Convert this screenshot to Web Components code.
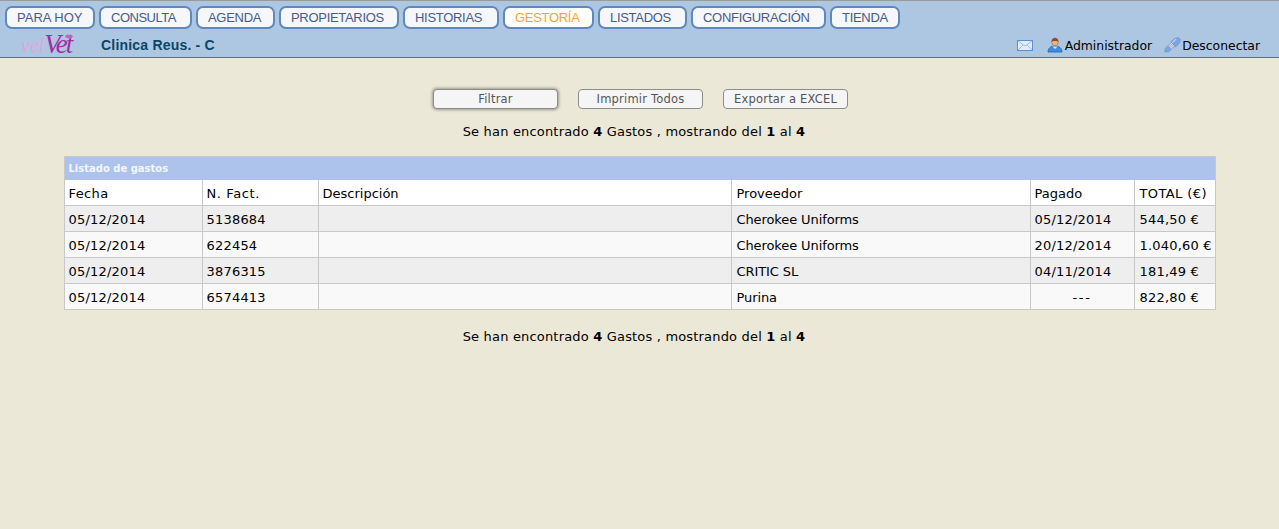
<!DOCTYPE html>
<html lang="es"><head><meta charset="utf-8"><title>Gastos</title>
<style>
html,body{margin:0;height:100%;background:#ece8d8;}
body{font:13px "DejaVu Sans",Verdana,sans-serif;color:#000;height:529px;overflow:hidden}
</style></head><body>
<app-header></app-header>
<main-area>
  <action-bar>
    <action-button focused>Filtrar</action-button>
    <action-button>Imprimir Todos</action-button>
    <action-button>Exportar a EXCEL</action-button>
  </action-bar>
  <result-count></result-count>
  <data-table title="Listado de gastos">
    <data-row kind="head" cells="Fecha|N. Fact.|Descripción|Proveedor|Pagado|TOTAL (€)" ls=".4|.6|0|0|0|.4"></data-row>
    <data-row kind="odd" cells="05/12/2014|5138684||Cherokee Uniforms|05/12/2014|544,50 €"></data-row>
    <data-row kind="even" cells="05/12/2014|622454||Cherokee Uniforms|20/12/2014|1.040,60 €"></data-row>
    <data-row kind="odd" cells="05/12/2014|3876315||CRITIC SL|04/11/2014|181,49 €"></data-row>
    <data-row kind="even" cells="05/12/2014|6574413||Purina|---|822,80 €" ls=".2|.2|0|-.1|1.6|.2" center="4"></data-row>
  </data-table>
  <result-count></result-count>
</main-area>
<script>
const def=(name,html,init)=>customElements.define(name,class extends HTMLElement{
  constructor(){super();this.attachShadow({mode:'open'}).innerHTML=html;}
  connectedCallback(){init&&init.call(this,this.shadowRoot);}
});
def('nav-tab',`<style>
:host{display:block;box-sizing:border-box;height:23px;border:2px solid #5f88bc;border-radius:7px;background:#f5f7fa;color:#4a5a8a;
font:13px/19px "Liberation Sans",Arial,sans-serif;padding:0 10px;white-space:nowrap;letter-spacing:-.3px}
:host([active]){background:#fff;color:#f5a623}
</style><slot></slot>`);
def('app-header',`<style>
:host{display:block;box-sizing:border-box;height:58px;background:#adc7e3;border-top:1px solid #9a9a9a;border-bottom:1px solid #5d7080;padding:5px 0 0 5px}
nav{display:flex;gap:4px}
.sub{display:flex;align-items:center;height:24px;margin-top:4px}
.logo{width:96px;height:24px;box-sizing:border-box;padding-left:16px;font:italic 20px/24px "Liberation Serif",serif;color:#e3a3dc;white-space:nowrap;position:relative}
.logo b{font-weight:400;font-size:27px;color:#a52ba0;letter-spacing:-2px;line-height:20px;vertical-align:-1px}
.logo svg{position:absolute;left:60px;top:1px}
.clinic{font:bold 14px "Liberation Sans",Arial,sans-serif;color:#0c4566;letter-spacing:.2px}
.right{margin-left:auto;display:flex;align-items:center;padding-right:19px;font-size:12.400px;color:#000}
.right span{display:flex;align-items:center}
svg{display:block;flex:none}
</style>
<nav>
<nav-tab style="width:90px;letter-spacing:0">PARA HOY</nav-tab><nav-tab style="width:93px;letter-spacing:-.5px">CONSULTA</nav-tab><nav-tab style="width:79px">AGENDA</nav-tab><nav-tab style="width:120px">PROPIETARIOS</nav-tab><nav-tab style="width:96px">HISTORIAS</nav-tab><nav-tab active style="width:91px">GESTORÍA</nav-tab><nav-tab style="width:89px">LISTADOS</nav-tab><nav-tab style="width:135px">CONFIGURACIÓN</nav-tab><nav-tab style="width:70px">TIENDA</nav-tab>
</nav>
<div class="sub">
<div class="logo">vel<b>Vet</b><svg width="8" height="5" viewBox="0 0 8 5"><path d="M0 2.500C2 0 3 .5 4 1c1-.5 2-1 4 1.500C6 5 2 5 0 2.500z" fill="#b968b8"/></svg></div>
<div class="clinic">Clinica Reus. - C</div>
<div class="right">
<svg width="16" height="11" viewBox="0 0 16 11" style="margin-right:14px"><rect x=".5" y=".5" width="15" height="10" fill="#e4eefa" stroke="#5a8fd0"/><path d="M1 1l7 5 7-5M1 10l5-5M15 10l-5-5" fill="none" stroke="#9dbde6"/></svg>
<svg width="16" height="16" viewBox="0 0 16 16" style="margin-right:2px"><path d="M1 15c0-4 3-6 7-6s7 2 7 6z" fill="#3f8de0" stroke="#1f5fae" stroke-width=".8"/><path d="M5.500 9.500L8 12l2.500-2.500z" fill="#cfe4fa"/><circle cx="8" cy="5.200" r="3.400" fill="#e9b48c" stroke="#9c6a45" stroke-width=".6"/><path d="M4.600 5c0-3 1.600-4.200 3.400-4.200S11.400 2 11.400 5C10 3.600 6 3.600 4.600 5z" fill="#8a4f25"/></svg>
<span style="margin-right:12px">Administrador</span>
<svg width="17" height="16" viewBox="0 0 17 16" style="margin-right:1px"><g transform="rotate(-42 8.500 8)"><path d="M-2 8l3-2.500h4v5H1z" fill="#7fa5e0" stroke="#5c80bd" stroke-width=".4"/><rect x="5" y="5.500" width="4.500" height="5" fill="#dfe3ea" stroke="#77889f" stroke-width=".5"/><path d="M6.500 5.500v5M8 5.500v5" stroke="#7c8ca5" stroke-width=".6"/><path d="M9.500 4.500h5l3.500 2v3l-3.500 2h-5z" fill="#7fa5e0" stroke="#5c80bd" stroke-width=".4"/><path d="M10 6h5" stroke="#c5d7f3"/></g></svg>
<span>Desconectar</span>
</div></div>`);
def('main-area',`<style>:host{display:flex;flex-direction:column;align-items:center;padding-top:31px}</style><slot></slot>`);
def('action-bar',`<style>:host{display:flex;gap:20px;margin:0 0 14px 2px}</style><slot></slot>`);
def('action-button',`<style>
:host{display:block;box-sizing:border-box;width:125px;height:20px;border:1px solid #8c8c8c;border-radius:4px;background:#f5f5f5;color:#555;font:11.500px/18px "DejaVu Sans",Verdana,sans-serif;text-align:center;letter-spacing:.2px}
:host([focused]){box-shadow:0 0 3px 1px rgba(0,0,0,.35)}
</style><slot></slot>`);
def('result-count',`<style>:host{display:block;height:18px;line-height:18px;font-size:13px;text-align:center;white-space:pre;letter-spacing:.18px;padding-right:11px}</style>Se han encontrado <b>4</b> Gastos , mostrando del <b>1</b> al <b>4</b>`);
def('data-table',`<style>
:host{display:block;box-sizing:border-box;width:1152px;margin:15px 0 18px 0;border:1px solid #c8c8c8;border-bottom:0}
.t{height:23px;background:#aec3eb;color:#f2f6fd;font:bold 10px/23px "DejaVu Sans",Verdana,sans-serif;padding-left:4px}
</style><div class="t"></div><slot></slot>`,function(r){r.querySelector('.t').textContent=this.getAttribute('title');this.removeAttribute('title');});
def('data-row',`<style>
:host{display:grid;grid-template-columns:138px 116px 413px 299px 104px 81px;height:26px;box-sizing:border-box;border-bottom:1px solid #c8c8c8;font-size:13px;line-height:27px}
:host([kind=head]){background:#fff}:host([kind=odd]){background:#eee}:host([kind=even]){background:#f9f9f9}
div{padding-left:4px;border-right:1px solid #c8c8c8;box-sizing:border-box;white-space:nowrap;overflow:hidden}
div:last-child{border-right:0}
div:nth-of-type(4),div:nth-of-type(6){padding-left:5px}
.c{text-align:center;padding-left:0}
</style>`,function(r){const c=this.getAttribute('center');const ls=(this.getAttribute('ls')||'.2|.2|0|-.1|.2|.2').split('|');this.getAttribute('cells').split('|').forEach((t,i)=>{const d=document.createElement('div');d.textContent=t;d.style.letterSpacing=ls[i]+'px';if(String(i)===c)d.className='c';r.appendChild(d);});});
</script>
</body></html>
